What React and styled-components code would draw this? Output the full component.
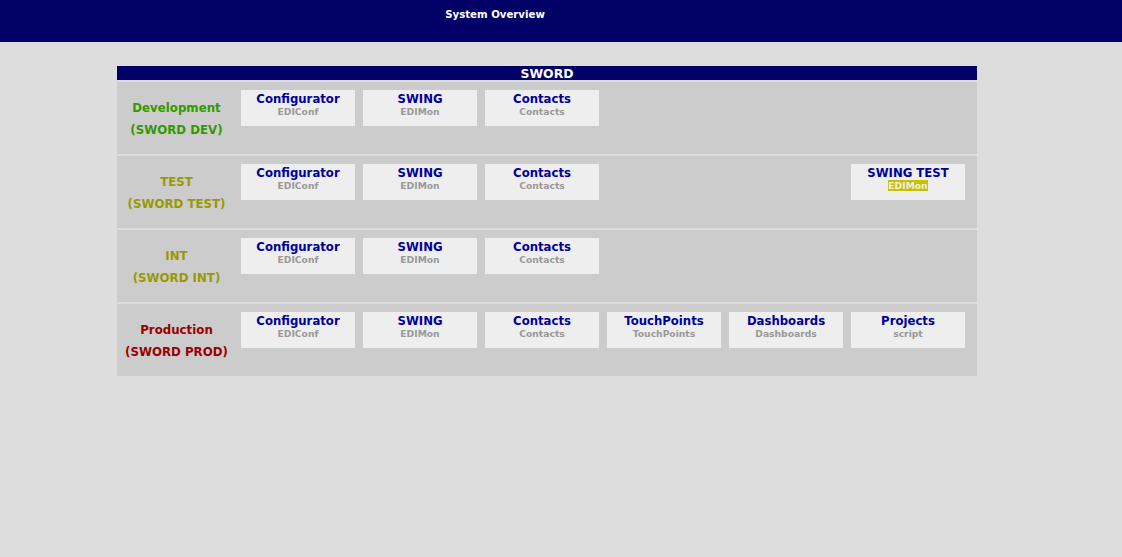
import React from "react";
import styled, { createGlobalStyle } from "styled-components";

const Global = createGlobalStyle`
  html, body { margin: 0; padding: 0; background: #dddddd; }
  body { font-family: "DejaVu Sans", Verdana, sans-serif; font-weight: bold; }
`;

const TopBar = styled.header`
  height: 42px;
  background: #000066;
`;

const TopTitle = styled.div`
  width: 990px;
  padding-top: 8px;
  text-align: center;
  color: #ffffff;
  font-size: 10.2px;
  line-height: 13px;
`;

const Panel = styled.section`
  width: 860px;
  margin: 24px 0 0 117px;
  display: flex;
  flex-direction: column;
  gap: 2px;
`;

const PanelHead = styled.div`
  height: 14px;
  background: #000066;
  color: #ffffff;
  text-align: center;
  font-size: 12.4px;
  line-height: 15px;
`;

const Row = styled.div`
  height: 72px;
  background: #cccccc;
  display: grid;
  grid-template-columns: 116px repeat(6, 114px);
  grid-template-rows: 36px;
  column-gap: 8px;
  padding: 8px 12px 0 0;
  box-sizing: border-box;
`;

const Label = styled.div`
  grid-column: 1;
  height: 72px;
  margin-top: -7px;
  padding-left: 3px;
  display: flex;
  flex-direction: column;
  justify-content: center;
  align-items: center;
  color: ${(p) => p.$color};
  font-size: 11.8px;
  line-height: 22px;
  text-align: center;
  white-space: nowrap;
`;

const Card = styled.a`
  grid-column: ${(p) => p.$col};
  height: 36px;
  background: #eeeeee;
  display: flex;
  flex-direction: column;
  align-items: center;
  text-decoration: none;
`;

const CardTitle = styled.span`
  margin-top: 2px;
  color: #000099;
  font-size: 11.7px;
  line-height: 14px;
`;

const CardSub = styled.span`
  color: ${(p) => (p.$hl ? "#eeeeee" : "#999999")};
  background: ${(p) => (p.$hl ? "#c8c000" : "transparent")};
  font-size: 9.2px;
  line-height: 11px;
`;

const base = [
  { t: "Configurator", s: "EDIConf" },
  { t: "SWING", s: "EDIMon" },
  { t: "Contacts", s: "Contacts" },
];

const rows = [
  { name: "Development", env: "(SWORD DEV)", color: "#339900", cards: base },
  {
    name: "TEST",
    env: "(SWORD TEST)",
    color: "#999900",
    cards: [...base, { t: "SWING TEST", s: "EDIMon", hl: true, col: 7 }],
  },
  { name: "INT", env: "(SWORD INT)", color: "#999900", cards: base },
  {
    name: "Production",
    env: "(SWORD PROD)",
    color: "#990000",
    cards: [
      ...base,
      { t: "TouchPoints", s: "TouchPoints" },
      { t: "Dashboards", s: "Dashboards" },
      { t: "Projects", s: "script" },
    ],
  },
];

export default function App() {
  return (
    <>
      <Global />
      <TopBar>
        <TopTitle>System Overview</TopTitle>
      </TopBar>
      <Panel>
        <PanelHead>SWORD</PanelHead>
        {rows.map((r) => (
          <Row key={r.name}>
            <Label $color={r.color}>
              <span>{r.name}</span>
              <span>{r.env}</span>
            </Label>
            {r.cards.map((c, i) => (
              <Card key={c.t} href="#" $col={c.col || i + 2}>
                <CardTitle>{c.t}</CardTitle>
                <CardSub $hl={c.hl}>{c.s}</CardSub>
              </Card>
            ))}
          </Row>
        ))}
      </Panel>
    </>
  );
}
